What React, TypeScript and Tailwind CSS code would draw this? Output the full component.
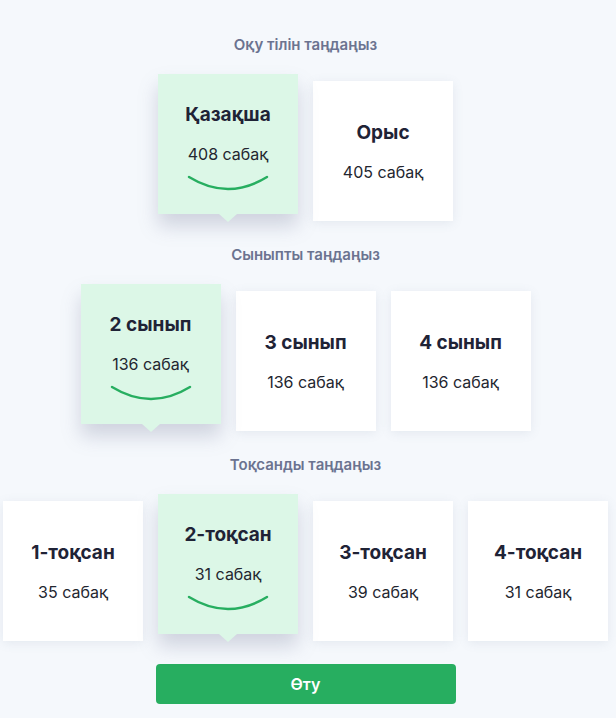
import { useState } from "react"

const font = { fontFamily: "Inter, 'Noto Sans', sans-serif" }

type Item = { title: string; count: string }

const Arc = () => (
  <svg width="82" height="16" viewBox="0 0 82 16" className="mt-[11px]">
    <path d="M2 2 Q41 26 80 2" fill="none" stroke="#27ae60" strokeWidth="2.4" strokeLinecap="round" />
  </svg>
)

const Card = ({ item, active, onClick }: { item: Item; active: boolean; onClick: () => void }) => {
  if (active) {
    return (
      <div
        onClick={onClick}
        className="relative w-[140px] h-[140px] -translate-y-[7px] bg-[#dcf7e7] flex flex-col items-center justify-center cursor-pointer shadow-[0_12px_18px_rgba(110,120,150,0.28)]"
      >
        <div className="text-[19px] font-bold text-[#1f2336] leading-6 mt-[6px]">{item.title}</div>
        <div className="text-[16px] text-[#23262f] leading-5 mt-[17px]">{item.count}</div>
        <Arc />
        <div className="absolute left-1/2 -translate-x-1/2 top-full w-0 h-0 border-l-[9px] border-r-[9px] border-t-[8px] border-l-transparent border-r-transparent border-t-[#dcf7e7]" />
      </div>
    )
  }
  return (
    <div
      onClick={onClick}
      className="w-[140px] h-[140px] bg-white flex flex-col items-center justify-center cursor-pointer shadow-[0_2px_10px_rgba(110,120,150,0.12)]"
    >
      <div className="text-[19px] font-bold text-[#1f2336] leading-6">{item.title}</div>
      <div className="text-[16px] text-[#23262f] leading-5 mt-[17px]">{item.count}</div>
    </div>
  )
}

const Section = ({ label, items, sel, setSel }: { label: string; items: Item[]; sel: number; setSel: (i: number) => void }) => (
  <div className="flex flex-col items-center">
    <div className="text-[15px] font-semibold text-[#6b7390] leading-5">{label}</div>
    <div className="flex gap-[15px] mt-[26px]">
      {items.map((it, i) => (
        <Card key={it.title} item={it} active={i === sel} onClick={() => setSel(i)} />
      ))}
    </div>
  </div>
)

export default function App() {
  const [lang, setLang] = useState(0)
  const [grade, setGrade] = useState(0)
  const [quarter, setQuarter] = useState(1)

  return (
    <div className="min-h-screen bg-[#f5f8fc]" style={font}>
      <div className="w-[611px] flex flex-col items-center pt-[35px]">
        <Section
          label="Оқу тілін таңдаңыз"
          items={[
            { title: "Қазақша", count: "408 сабақ" },
            { title: "Орыс", count: "405 сабақ" },
          ]}
          sel={lang}
          setSel={setLang}
        />
        <div className="mt-[24px]">
          <Section
            label="Сыныпты таңдаңыз"
            items={[
              { title: "2 сынып", count: "136 сабақ" },
              { title: "3 сынып", count: "136 сабақ" },
              { title: "4 сынып", count: "136 сабақ" },
            ]}
            sel={grade}
            setSel={setGrade}
          />
        </div>
        <div className="mt-[24px]">
          <Section
            label="Тоқсанды таңдаңыз"
            items={[
              { title: "1-тоқсан", count: "35 сабақ" },
              { title: "2-тоқсан", count: "31 сабақ" },
              { title: "3-тоқсан", count: "39 сабақ" },
              { title: "4-тоқсан", count: "31 сабақ" },
            ]}
            sel={quarter}
            setSel={setQuarter}
          />
        </div>
        <button className="mt-[23px] w-[300px] h-[40px] rounded-[4px] bg-[#27ae60] text-white text-[16px] font-semibold">
          Өту
        </button>
      </div>
    </div>
  )
}
